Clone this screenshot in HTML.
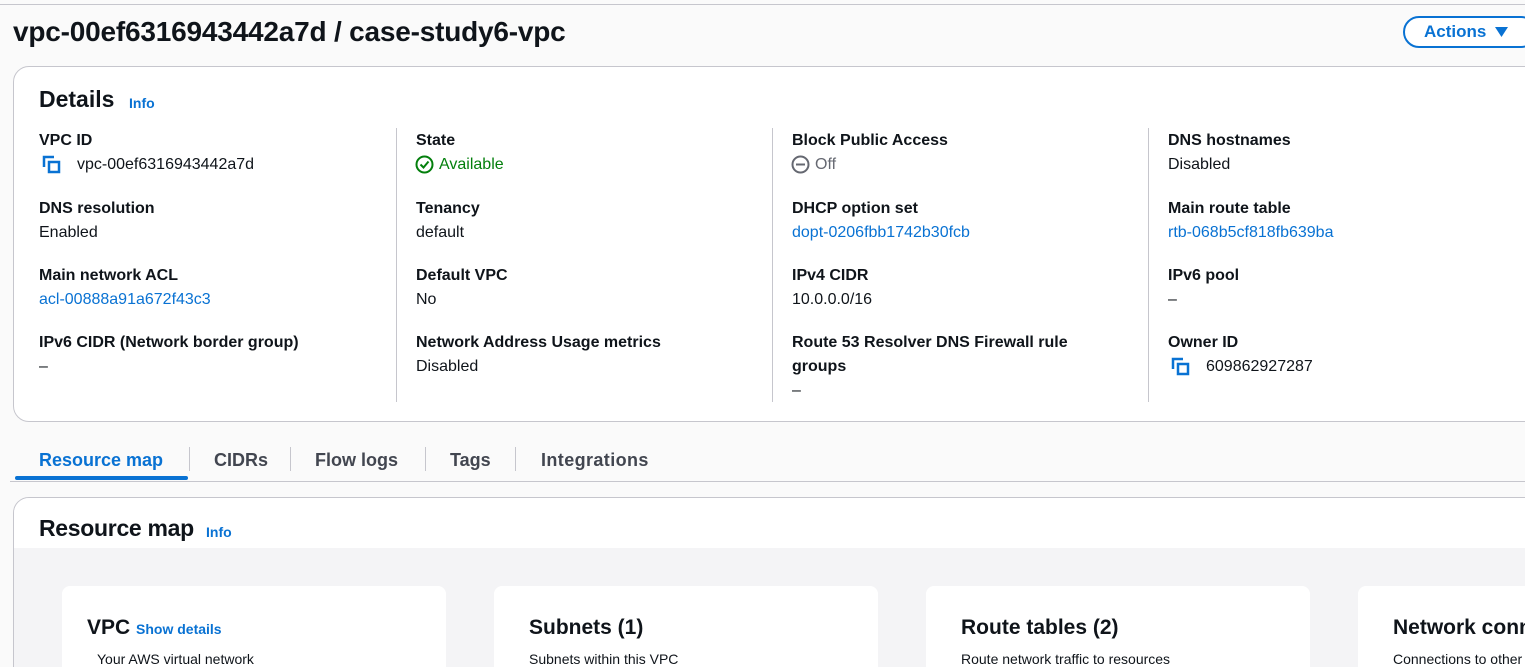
<!DOCTYPE html><html><head><style>
html,body{overflow:hidden}
body{margin:0;width:1525px;height:667px;background:#fafafa;font-family:"Liberation Sans",sans-serif;color:#0f141a;position:relative}
.wrap{position:absolute;left:0;top:0;width:1525px;height:667px;overflow:hidden}
.a{position:absolute;white-space:nowrap}
.lb{font-weight:bold;font-size:16px}
.v{font-size:16px}
.lk{color:#0972d3}
.dv{position:absolute;top:128px;height:274px;width:1px;background:#c6c6cd}
.tab{position:absolute;top:450px;font-size:18px;font-weight:bold;color:#424650}
.ts{position:absolute;top:447px;height:24px;width:1px;background:#c6c6cd}
.mc{position:absolute;top:586px;width:384px;height:100px;background:#fff;border-radius:8px}
.mt{position:absolute;left:35px;top:30px;font-size:21px;font-weight:bold}
.ms{position:absolute;left:35px;top:65px;font-size:14px;color:#0f141a}
</style></head><body><div class="wrap">
<div class="a" style="left:0;top:4px;width:1525px;height:1px;background:#c6c6cd"></div>
<div class="a" style="left:13px;top:16px;font-size:28px;font-weight:bold;letter-spacing:-0.2px">vpc-00ef6316943442a7d / case-study6-vpc</div>
<div class="a" style="left:1403px;top:16px;width:130px;height:28px;border:2px solid #0972d3;border-radius:16px;background:#fff"></div>
<div class="a" style="left:1424px;top:22px;font-size:17px;font-weight:bold;color:#0972d3">Actions</div>
<svg class="a" style="left:1495px;top:27px" width="13" height="10"><path d="M0 0H13L6.5 10Z" fill="#0972d3"/></svg>

<div class="a" style="left:13px;top:66px;width:1530px;height:354px;background:#fff;border:1px solid #c6c6cd;border-radius:16px"></div>
<div class="a" style="left:39px;top:86px;font-size:23px;font-weight:bold">Details</div>
<div class="a lk" style="left:129px;top:95px;font-size:14px;font-weight:bold">Info</div>
<div class="dv" style="left:396px"></div><div class="dv" style="left:772px"></div><div class="dv" style="left:1148px"></div>

<div class="a lb" style="left:39px;top:132px">VPC ID</div>
<svg class="a" style="left:42px;top:155px" width="20" height="20"><path d="M2 12V2H12" stroke="#0972d3" stroke-width="2.5" fill="none"/><rect x="7" y="7" width="10" height="10" stroke="#0972d3" stroke-width="2.5" fill="none"/></svg>
<div class="a v" style="left:77px;top:156px">vpc-00ef6316943442a7d</div>
<div class="a lb" style="left:39px;top:200px">DNS resolution</div><div class="a v" style="left:39px;top:224px">Enabled</div>
<div class="a lb" style="left:39px;top:267px">Main network ACL</div><div class="a v lk" style="left:39px;top:291px">acl-00888a91a672f43c3</div>
<div class="a lb" style="left:39px;top:334px">IPv6 CIDR (Network border group)</div><div class="a v" style="left:39px;top:358px">–</div>

<div class="a lb" style="left:416px;top:132px">State</div>
<svg class="a" style="left:415px;top:155px" width="19" height="19"><circle cx="9.5" cy="9.5" r="8" stroke="#037f0c" stroke-width="2" fill="none"/><path d="M5.5 9.5L8.5 12.5L13.5 6.5" stroke="#037f0c" stroke-width="2" fill="none"/></svg>
<div class="a v" style="left:439px;top:156px;color:#037f0c">Available</div>
<div class="a lb" style="left:416px;top:200px">Tenancy</div><div class="a v" style="left:416px;top:224px">default</div>
<div class="a lb" style="left:416px;top:267px">Default VPC</div><div class="a v" style="left:416px;top:291px">No</div>
<div class="a lb" style="left:416px;top:334px">Network Address Usage metrics</div><div class="a v" style="left:416px;top:358px">Disabled</div>

<div class="a lb" style="left:792px;top:132px">Block Public Access</div>
<svg class="a" style="left:791px;top:155px" width="19" height="19"><circle cx="9.5" cy="9.5" r="8" stroke="#656871" stroke-width="2" fill="none"/><path d="M5 9.5H14" stroke="#656871" stroke-width="2"/></svg>
<div class="a v" style="left:815px;top:156px;color:#656871">Off</div>
<div class="a lb" style="left:792px;top:200px">DHCP option set</div><div class="a v lk" style="left:792px;top:224px">dopt-0206fbb1742b30fcb</div>
<div class="a lb" style="left:792px;top:267px">IPv4 CIDR</div><div class="a v" style="left:792px;top:291px">10.0.0.0/16</div>
<div class="a lb" style="left:792px;top:334px">Route 53 Resolver DNS Firewall rule</div><div class="a lb" style="left:792px;top:358px">groups</div><div class="a v" style="left:792px;top:382px">–</div>

<div class="a lb" style="left:1168px;top:132px">DNS hostnames</div><div class="a v" style="left:1168px;top:156px">Disabled</div>
<div class="a lb" style="left:1168px;top:200px">Main route table</div><div class="a v lk" style="left:1168px;top:224px">rtb-068b5cf818fb639ba</div>
<div class="a lb" style="left:1168px;top:267px">IPv6 pool</div><div class="a v" style="left:1168px;top:291px">–</div>
<div class="a lb" style="left:1168px;top:334px">Owner ID</div>
<svg class="a" style="left:1171px;top:357px" width="20" height="20"><path d="M2 12V2H12" stroke="#0972d3" stroke-width="2.5" fill="none"/><rect x="7" y="7" width="10" height="10" stroke="#0972d3" stroke-width="2.5" fill="none"/></svg>
<div class="a v" style="left:1206px;top:358px">609862927287</div>

<div class="tab" style="left:39px;color:#0972d3">Resource map</div>
<div class="ts" style="left:189px"></div>
<div class="tab" style="left:214px">CIDRs</div>
<div class="ts" style="left:290px"></div>
<div class="tab" style="left:315px">Flow logs</div>
<div class="ts" style="left:425px"></div>
<div class="tab" style="left:450px">Tags</div>
<div class="ts" style="left:515px"></div>
<div class="tab" style="left:541px;letter-spacing:0.4px">Integrations</div>
<div class="a" style="left:15px;top:476px;width:173px;height:4px;background:#0972d3;border-radius:2px"></div>
<div class="a" style="left:10px;top:481px;width:1515px;height:1px;background:#c6c6cd"></div>

<div class="a" style="left:13px;top:497px;width:1530px;height:200px;background:#f4f4f6;border:1px solid #c6c6cd;border-radius:16px;overflow:hidden"><div style="height:50px;background:#fff"></div></div>
<div class="a" style="left:39px;top:515px;font-size:23px;font-weight:bold;letter-spacing:-0.3px">Resource map</div>
<div class="a lk" style="left:206px;top:524px;font-size:14px;font-weight:bold">Info</div>
<div class="mc" style="left:62px"><div class="mt" style="left:25px">VPC <span style="font-size:14px;color:#0972d3">Show details</span></div><div class="ms">Your AWS virtual network</div></div>
<div class="mc" style="left:494px"><div class="mt">Subnets (1)</div><div class="ms">Subnets within this VPC</div></div>
<div class="mc" style="left:926px"><div class="mt">Route tables (2)</div><div class="ms">Route network traffic to resources</div></div>
<div class="mc" style="left:1358px"><div class="mt">Network connections</div><div class="ms">Connections to other networks</div></div>
</div></body></html>
